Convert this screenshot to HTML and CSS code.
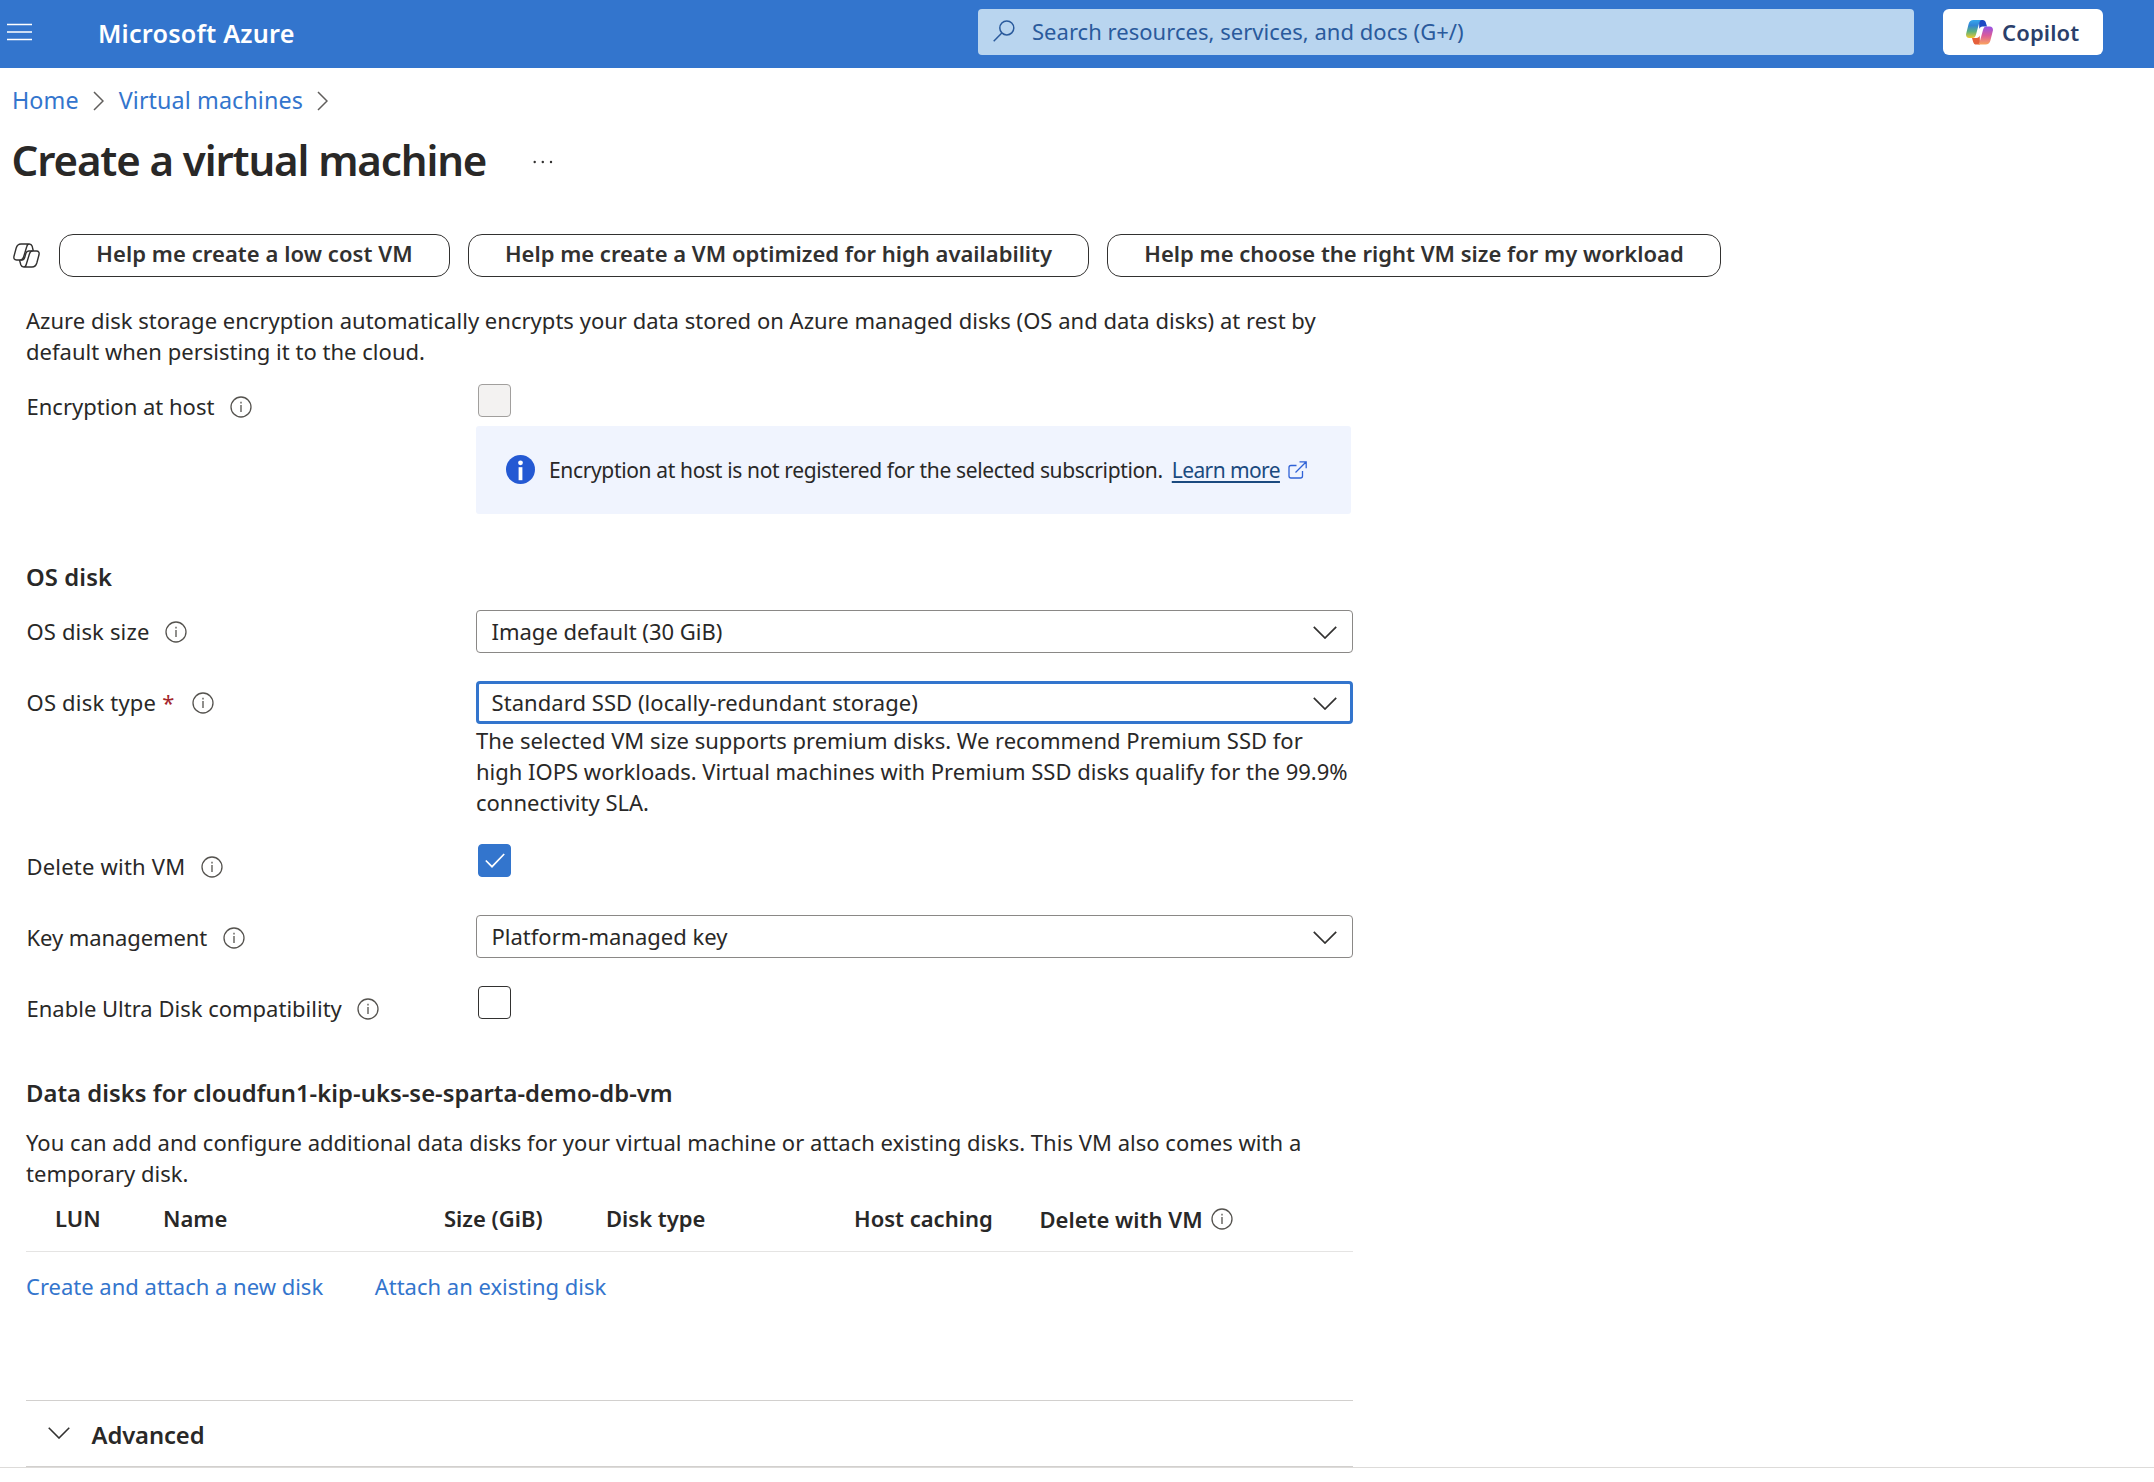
FILE: index.html
```
<!DOCTYPE html>
<html lang="en">
<head>
<meta charset="utf-8">
<title>Create a virtual machine - Microsoft Azure</title>
<link rel="stylesheet" href="styles.css">
</head>
<body>
<svg class="sprite" width="0" height="0">
  <symbol id="info" viewBox="0 0 22 22"><circle cx="11" cy="11" r="10" fill="none" stroke="#55534f" stroke-width="1.3"/><path d="M11 9v7M11 5.8v1.8" fill="none" stroke="#55534f" stroke-width="1.3"/></symbol>
  <symbol id="down" viewBox="0 0 24 13"><path d="M.8.8 12 12 23.2.8" fill="none" stroke="#323130" stroke-width="1.7"/></symbol>
  <symbol id="right" viewBox="0 0 11 20"><path d="M1 1l9 9-9 9" fill="none" stroke="#605e5c" stroke-width="1.5"/></symbol>
</svg>

<header class="topbar">
  <svg class="menu" viewBox="0 0 25 18"><path d="M0 1.5h25M0 9h25M0 16.5h25" stroke="#fff" stroke-width="1.7"/></svg>
  <div class="brand">Microsoft Azure</div>
  <div class="search">
    <svg class="search-icon" viewBox="0 0 22 22"><circle cx="13.8" cy="7.9" r="7" fill="none" stroke="#2a5a9c" stroke-width="1.5"/><path d="M8.8 13 .7 21.2" stroke="#2a5a9c" stroke-width="1.5"/></svg>
    <span>Search resources, services, and docs (G+/)</span>
  </div>
  <div class="copilot">
    <svg class="copilot-logo" viewBox="0 0 27 25">
      <defs>
        <linearGradient id="cool" x1="0" y1="0" x2="0" y2="1"><stop offset="0" stop-color="#35a8ee"/><stop offset=".3" stop-color="#3185d6"/><stop offset=".65" stop-color="#5fb27c"/><stop offset="1" stop-color="#f3c92c"/></linearGradient>
        <linearGradient id="warm" x1="0" y1="0" x2="0" y2="1"><stop offset="0" stop-color="#9552e6"/><stop offset=".5" stop-color="#da5c9a"/><stop offset="1" stop-color="#fba55e"/></linearGradient>
      </defs>
      <path d="M13 0h3.600c1.800 0 2.700 1 3.200 2.600L21 6.500h-4.500c-1.700 0-2.700.9-3.200 2.500z" fill="#1c49c4"/>
      <path d="M14 24.500h-3.600c-1.800 0-2.700-1-3.200-2.600L6 18h4.500c1.700 0 2.700-.9 3.200-2.500z" fill="#e5603b"/>
      <path d="M7.500 0H16c-1.500 0-2.300 1.300-2.800 3L10 14.500c-.7 2.400-1.600 3.500-3.600 3.500H3.200C.6 18-.4 16 .2 13.400L2.600 4C3.300 1.400 4.800 0 7.500 0z" fill="url(#cool)"/>
      <path d="M19.500 24.500H11c1.500 0 2.300-1.300 2.800-3L17 10c.7-2.400 1.600-3.500 3.600-3.500h3.200c2.600 0 3.600 2 3 4.600L24.400 20.500c-.7 2.600-2.200 4-4.900 4z" fill="url(#warm)"/>
    </svg>
    <span>Copilot</span>
  </div>
</header>

<nav class="crumbs">
  <a>Home</a><svg class="chev-right"><use href="#right"/></svg><a>Virtual machines</a><svg class="chev-right"><use href="#right"/></svg>
</nav>

<div class="title-row">
  <h1>Create a virtual machine</h1>
  <svg class="more" viewBox="0 0 20 4"><g fill="#323130"><circle cx="1.7" cy="2" r="1.2"/><circle cx="9.8" cy="2" r="1.2"/><circle cx="18" cy="2" r="1.2"/></g></svg>
</div>

<div class="pills">
  <svg class="copilot-line" viewBox="0 0 27 25" fill="none" stroke="#323130" stroke-width="1.4" stroke-linejoin="round">
    <path d="M16.200 1H8C5.500 1 4 2.300 3.200 5L1 13.200C.5 15.500 1.300 17 3.500 17h4c1.700 0 2.500-.9 3.100-3L13.700 3.800C14.200 2 15 1 16.200 1c1.700 0 2.500.8 3 2.300L20.300 8"/>
    <path d="M10.800 24H19c2.500 0 4-1.300 4.800-4L26 11.800C26.500 9.500 25.700 8 23.500 8h-4c-1.700 0-2.500.9-3.100 3l-3.100 10.200c-.5 1.800-1.300 2.800-2.500 2.800-1.700 0-2.500-.8-3-2.300L6.500 17"/>
    <path d="M19.500 8h-3.800c-1.500 0-2.300.7-2.800 2.300L11.700 14.500c-.5 1.700-1.300 2.500-2.900 2.500H7.500"/>
  </svg>
  <button class="pill pill-cost">Help me create a low cost VM</button>
  <button class="pill pill-availability">Help me create a VM optimized for high availability</button>
  <button class="pill pill-size">Help me choose the right VM size for my workload</button>
</div>

<main class="form">
  <p class="intro">Azure disk storage encryption automatically encrypts your data stored on Azure managed disks (OS and data disks) at rest by<br>default when persisting it to the cloud.</p>

  <div class="row row-host">
    <div class="label">Encryption at host<svg class="info"><use href="#info"/></svg></div>
    <div class="field">
      <div class="check check-disabled"></div>
      <div class="notice">
        <svg class="notice-icon" viewBox="0 0 29 29"><circle cx="14.5" cy="14.5" r="14.5" fill="#2459d3"/><circle cx="14.5" cy="7.8" r="2.4" fill="#fff"/><path d="M14.500 12.200v13" stroke="#fff" stroke-width="3.8"/></svg>
        <span>Encryption at host is not registered for the selected subscription.</span>
        <a class="learn">Learn more</a>
        <svg class="external" viewBox="0 0 19 18" fill="none" stroke="#2f62d6" stroke-width="1.3"><path d="M8.500 4.500H3a2 2 0 0 0-2 2V15a2 2 0 0 0 2 2h9.500a2 2 0 0 0 2-2v-5M11.500.8h6.700v6.400M18 1 7.500 11.500"/></svg>
      </div>
    </div>
  </div>

  <h2 class="os-heading">OS disk</h2>

  <div class="row row-size">
    <div class="label">OS disk size<svg class="info"><use href="#info"/></svg></div>
    <div class="select"><span>Image default (30 GiB)</span><svg class="chev-down"><use href="#down"/></svg></div>
  </div>

  <div class="row row-type">
    <div class="label">OS disk type <span class="req">*</span><svg class="info"><use href="#info"/></svg></div>
    <div class="field">
      <div class="select select-focus"><span>Standard SSD (locally-redundant storage)</span><svg class="chev-down"><use href="#down"/></svg></div>
      <p class="hint">The selected VM size supports premium disks. We recommend Premium SSD for<br>high IOPS workloads. Virtual machines with Premium SSD disks qualify for the 99.9%<br>connectivity SLA.</p>
    </div>
  </div>

  <div class="row row-delete">
    <div class="label">Delete with VM<svg class="info"><use href="#info"/></svg></div>
    <div class="check check-on"><svg class="tick" viewBox="0 0 20 15"><path d="M.8 7.500 7 13.700 19.200 1" fill="none" stroke="#fff" stroke-width="1.7"/></svg></div>
  </div>

  <div class="row row-key">
    <div class="label">Key management<svg class="info"><use href="#info"/></svg></div>
    <div class="select"><span>Platform-managed key</span><svg class="chev-down"><use href="#down"/></svg></div>
  </div>

  <div class="row row-ultra">
    <div class="label">Enable Ultra Disk compatibility<svg class="info"><use href="#info"/></svg></div>
    <div class="check"></div>
  </div>

  <h2 class="data-heading">Data disks for cloudfun1-kip-uks-se-sparta-demo-db-vm</h2>
  <p class="data-text">You can add and configure additional data disks for your virtual machine or attach existing disks. This VM also comes with a<br>temporary disk.</p>

  <div class="disk-head">
    <span>LUN</span><span>Name</span><span>Size (GiB)</span><span>Disk type</span><span>Host caching</span>
    <span class="delete-col">Delete with VM<svg class="info info-tight"><use href="#info"/></svg></span>
  </div>
  <div class="disk-links"><a>Create and attach a new disk</a><a>Attach an existing disk</a></div>

  <div class="advanced">
    <svg class="chev-adv" viewBox="0 0 24 13"><use href="#down" width="24" height="13"/></svg>
    <h2>Advanced</h2>
  </div>
</main>
<footer class="footer"></footer>
</body>
</html>
```
FILE: styles.css
```
* { box-sizing: border-box; }
body {
  margin: 0;
  height: 1482px;
  overflow: hidden;
  background: #fff;
  color: #292827;
  font: 400 22px/31px "Noto Sans", "Open Sans", sans-serif;
}
h1, h2, p { margin: 0; }
h2 { font-size: 23.8px; line-height: 32px; font-weight: 600; }
svg { display: block; flex: none; }
span, a, h1, .label, .brand { white-space: nowrap; }
a { color: #3375cd; }
.sprite { position: absolute; }

/* top bar */
.topbar {
  display: flex;
  align-items: flex-start;
  height: 68px;
  padding: 9px 51px 0 7px;
  background: #3375cd;
}
.menu { width: 25px; height: 18px; margin-top: 14px; }
.brand {
  width: 879px;
  margin-left: 66px;
  padding-top: 8px;
  color: #fff;
  font-size: 25.2px;
  line-height: 32px;
  font-weight: 600;
  letter-spacing: .2px;
}
.search {
  display: flex;
  align-items: center;
  width: 936px;
  height: 46px;
  margin-left: 1px;
  padding: 0 0 2px 15px;
  border-radius: 4px;
  background: #b9d5ef;
  color: #2a5a9c;
}
.search-icon { width: 22px; height: 22px; margin-right: 17px; }
.search span { letter-spacing: .03px; }
.copilot {
  display: flex;
  align-items: center;
  width: 160px;
  height: 46px;
  margin-left: 29px;
  padding-left: 23px;
  border-radius: 6px;
  background: #fff;
  color: #2b3f6b;
  font-weight: 600;
  letter-spacing: .15px;
}
.copilot-logo { width: 27px; height: 25px; margin-right: 9px; }

/* breadcrumb and title */
.crumbs {
  display: flex;
  align-items: center;
  height: 32px;
  margin-top: 16px;
  padding-left: 12px;
  font-size: 23.3px;
  line-height: 32px;
  letter-spacing: .1px;
}
.chev-right { width: 11px; height: 20px; margin: 2px 14.5px 0; }
.title-row {
  display: flex;
  align-items: center;
  height: 56px;
  margin-top: 16px;
  padding-left: 11.5px;
}
h1 { font-size: 42px; line-height: 56px; font-weight: 600; letter-spacing: -1.12px; }
.more { width: 22px; height: 4px; margin: 4px 0 0 46px; }

/* suggestion pills */
.pills {
  display: flex;
  height: 43px;
  margin-top: 46px;
  padding-left: 13px;
}
.copilot-line { width: 27px; height: 25px; margin: 9px 19px 0 0; }
.pill {
  height: 43px;
  margin: 0 18px 0 0;
  padding: 0 0 4px;
  border: 1.5px solid #323130;
  border-radius: 14px;
  background: #fff;
  color: #323130;
  font: 600 22px/31px "Noto Sans", "Open Sans", sans-serif;
  white-space: nowrap;
}
.pill-cost { width: 391px; letter-spacing: .06px; }
.pill-availability { width: 621px; }
.pill-size { width: 614px; }

/* form rows */
.form { width: 1353px; margin-top: 28px; padding-left: 26px; }
.row { display: grid; grid-template-columns: 450px 877px; align-items: start; }
.label { display: flex; padding: 7px 0 0 .5px; }
.info { width: 22px; height: 22px; margin: 4.5px 0 0 15.5px; }
.req { margin-left: 6px; color: #a4262c; }
.intro, .data-text { white-space: nowrap; letter-spacing: .02px; }
.row-host { margin-top: 17px; height: 130px; }
.os-heading { margin-top: 47px; letter-spacing: .1px; }
.row-size { margin-top: 17px; height: 43px; }
.row-type { margin-top: 28px; height: 137px; }
.row-delete { margin-top: 26px; height: 34px; }
.row-key { margin-top: 37px; height: 43px; }
.row-ultra { margin-top: 28px; height: 34px; }
.row-size .label, .row-type .label { padding-top: 6px; }
.row-size .label { letter-spacing: .15px; }
.row-delete .label { letter-spacing: .2px; }
.row-type .label { letter-spacing: .2px; }
.row-type .info { margin-left: 17px; }
.row-key .label { letter-spacing: -.08px; }

.check {
  display: flex;
  align-items: center;
  justify-content: center;
  width: 33px;
  height: 33px;
  margin-left: 2px;
  border: 1.5px solid #323130;
  border-radius: 4px;
}
.check-disabled { border-color: #a19f9d; background: #f3f2f1; }
.check-on { border-color: #3375cd; background: #3375cd; }
.tick { width: 20px; height: 15px; margin-bottom: 1px; }

.notice {
  display: flex;
  align-items: center;
  width: 875px;
  height: 88px;
  margin-top: 9px;
  padding-left: 30px;
  border-radius: 3px;
  background: #f0f4fe;
  font-size: 21px;
  letter-spacing: -.35px;
}
.notice-icon { width: 29px; height: 29px; margin: 0 14px 2px 0; }
.learn {
  margin-left: 9px;
  color: #1b4a7f;
  letter-spacing: -.6px;
  text-decoration: underline;
  text-decoration-thickness: 2px;
  text-underline-offset: 3px;
}
.external { width: 19px; height: 18px; margin-left: 8px; }

.select {
  display: flex;
  align-items: center;
  justify-content: space-between;
  width: 877px;
  height: 43px;
  padding: 0 15.5px 0 14.5px;
  border: 1.5px solid #8a8886;
  border-radius: 4px;
}
.select-focus { padding: 0 13.5px 0 12.5px; border: 3px solid #3375cd; letter-spacing: .06px; }
.chev-down { width: 24px; height: 13px; margin-top: 1px; }
.hint { margin-top: 1px; white-space: nowrap; }

/* data disks */
.data-heading { margin-top: 57px; letter-spacing: .04px; }
.data-text { margin-top: 18px; }
.disk-head {
  display: grid;
  grid-template-columns: 108px 281px 162px 248px 185.5px auto;
  height: 62.5px;
  padding: 14px 0 0 29px;
  border-bottom: 1.5px solid #e5e4e3;
  font-weight: 600;
}
.delete-col { display: flex; padding-top: 1px; }
.info-tight { margin: 4px 0 0 8px; }
.disk-links { display: flex; gap: 51.5px; margin-top: 19px; }

/* collapsed section */
.advanced {
  display: flex;
  height: 67px;
  margin-top: 98px;
  padding: 18px 0 0 22px;
  border-top: 1.5px solid #d2d0ce;
  border-bottom: 1.5px solid #d2d0ce;
}
.advanced h2 { letter-spacing: -.1px; }
.chev-adv { width: 22px; height: 12px; margin: 8px 21.5px 0 0; }
.footer { border-top: 1.5px solid #dddbd9; }
```
